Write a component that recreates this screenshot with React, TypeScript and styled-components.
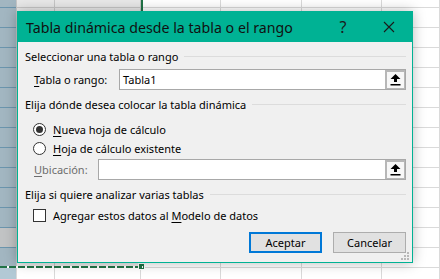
import React from 'react';
import styled, { createGlobalStyle } from 'styled-components';

const TEAL = '#00b294';

const GlobalStyle = createGlobalStyle`
  html, body {
    margin: 0;
    padding: 0;
  }
  body {
    width: 440px;
    height: 279px;
    overflow: hidden;
    background: #ffffff;
    font-family: "Noto Sans", "Open Sans", sans-serif;
  }
`;

const columns = [
  { width: 17, filled: true },
  { width: 38 },
  { width: 86 },
  { width: 80 },
  { width: 81 },
  { width: 80 },
  { width: 58 },
];

const App: React.FC = () => (
  <>
    <GlobalStyle />
    <Sheet>
      {columns.map((c, i) => (
        <Column key={i} $width={c.width} $filled={!!c.filled} />
      ))}
      <CopyMarquee>
        <MarqueeHandle />
      </CopyMarquee>
      <Dialog>
        <TitleBar>
          <Title>Tabla dinámica desde la tabla o el rango</Title>
          <TitleButton>?</TitleButton>
          <TitleButton>
            <svg width="12" height="12" viewBox="0 0 12 12">
              <path d="M1 1 L11 11 M11 1 L1 11" stroke="#1a1a1a" strokeWidth="1.1" fill="none" />
            </svg>
          </TitleButton>
        </TitleBar>
        <Body>
          <SectionHeader $top={6}>Seleccionar una tabla o rango</SectionHeader>
          <FieldRow $top={5}>
            <FieldLabel $width={85}>
              <Key>T</Key>abla o rango:
            </FieldLabel>
            <RefEdit>
              <RefText>Tabla1</RefText>
              <RefButton>
                <CollapseIcon />
              </RefButton>
            </RefEdit>
          </FieldRow>

          <SectionHeader $top={6}>Elija dónde desea colocar la tabla dinámica</SectionHeader>
          <OptionList $top={8}>
            <OptionRow>
              <Radio $checked />
              <OptionText>
                <Key>N</Key>ueva hoja de cálculo
              </OptionText>
            </OptionRow>
            <OptionRow>
              <Radio $checked={false} />
              <OptionText>
                <Key>H</Key>oja de cálculo existente
              </OptionText>
            </OptionRow>
          </OptionList>
          <FieldRow $top={1}>
            <FieldLabel $width={64} $disabled>
              <Key>U</Key>bicación:
            </FieldLabel>
            <RefEdit>
              <RefText />
              <RefButton>
                <CollapseIcon />
              </RefButton>
            </RefEdit>
          </FieldRow>

          <SectionHeader $top={6}>Elija si quiere analizar varias tablas</SectionHeader>
          <OptionList $top={4}>
            <OptionRow>
              <CheckBox />
              <OptionText>
                Agregar estos datos al <Key>M</Key>odelo de datos
              </OptionText>
            </OptionRow>
          </OptionList>

          <ButtonBar>
            <PushButton $default>Aceptar</PushButton>
            <PushButton>Cancelar</PushButton>
          </ButtonBar>
        </Body>
        <Grip>
          <svg width="8" height="8" viewBox="0 0 8 8">
            <rect x="6" y="0" width="2" height="2" fill="#b8b8b8" />
            <rect x="3" y="3" width="2" height="2" fill="#b8b8b8" />
            <rect x="6" y="3" width="2" height="2" fill="#b8b8b8" />
            <rect x="0" y="6" width="2" height="2" fill="#b8b8b8" />
            <rect x="3" y="6" width="2" height="2" fill="#b8b8b8" />
            <rect x="6" y="6" width="2" height="2" fill="#b8b8b8" />
          </svg>
        </Grip>
      </Dialog>
    </Sheet>
  </>
);

const CollapseIcon: React.FC = () => (
  <svg width="11" height="12" viewBox="0 0 11 12">
    <path d="M5.5 0 L10.5 5 L7 5 L7 8 L4 8 L4 5 L0.5 5 Z" fill="#000" />
    <rect x="0.5" y="10" width="10" height="1.5" fill="#000" />
  </svg>
);

export default App;

const Sheet = styled.div`
  position: relative;
  display: flex;
  width: 440px;
  height: 279px;
  overflow: hidden;
  background-color: #ffffff;
  background-image: linear-gradient(to bottom, #dadada 0 1px, transparent 1px);
  background-size: 100% 20px;
  background-position: 0 7px;
`;

// first column holds table cells with a blue-grey fill and one grey cell
const Column = styled.div<{ $width: number; $filled: boolean }>`
  flex: none;
  width: ${p => p.$width}px;
  height: 100%;
  box-sizing: border-box;
  border-right: 1px solid #dadada;
  background-color: ${p => (p.$filled ? '#b2c9d5' : 'transparent')};
  background-image: ${p =>
    p.$filled
      ? 'linear-gradient(to bottom, #76a4bf 0 1px, transparent 1px), linear-gradient(#d5d7d8, #d5d7d8)'
      : 'none'};
  background-size: 100% 20px, 100% 19px;
  background-position: 0 7px, 0 228px;
  background-repeat: repeat, no-repeat;
`;

const CopyMarquee = styled.div`
  position: absolute;
  left: 0;
  top: 0;
  width: 143px;
  height: 268px;
  box-sizing: border-box;
  background: rgba(0, 0, 0, 0.09);
  border-right: 2px solid #217346;
  border-bottom: 2px solid #217346;
  &::after {
    content: '';
    position: absolute;
    left: 0;
    right: -2px;
    bottom: -2px;
    height: 2px;
    background: repeating-linear-gradient(to right, transparent 0 7px, #ffffff 7px 9px);
  }
`;

const MarqueeHandle = styled.div`
  position: absolute;
  right: -4px;
  bottom: -4px;
  width: 5px;
  height: 5px;
  background: #217346;
  border: 1px solid #ffffff;
`;

const Dialog = styled.div`
  position: absolute;
  left: 17px;
  top: 11px;
  width: 396px;
  height: 252px;
  box-sizing: border-box;
  display: flex;
  flex-direction: column;
  border: 1px solid ${TEAL};
  background: #f0f0f0;
  box-shadow: 0 0 12px rgba(0, 0, 0, 0.28);
  color: #000;
  font-size: 11px;
`;

const TitleBar = styled.div`
  display: flex;
  align-items: center;
  height: 30px;
  flex: none;
  background: ${TEAL};
  padding-left: 8px;
`;

const Title = styled.div`
  flex: 1;
  font-size: 14.2px;
  color: #111;
  white-space: nowrap;
`;

const TitleButton = styled.div`
  width: 46px;
  height: 30px;
  display: flex;
  align-items: center;
  justify-content: center;
  font-size: 16px;
  color: #1a1a1a;
`;

const Body = styled.div`
  flex: 1;
  display: flex;
  flex-direction: column;
  padding: 0 6px 0 7px;
`;

const SectionHeader = styled.div<{ $top: number }>`
  display: flex;
  align-items: center;
  height: 16px;
  margin-top: ${p => p.$top}px;
  white-space: nowrap;
  &::after {
    content: '';
    flex: 1;
    height: 1px;
    margin-left: 6px;
    background: #dcdcdc;
  }
`;

const FieldRow = styled.div<{ $top: number }>`
  display: flex;
  align-items: center;
  margin-top: ${p => p.$top}px;
  padding-left: 9px;
`;

const FieldLabel = styled.div<{ $width: number; $disabled?: boolean }>`
  flex: none;
  width: ${p => p.$width}px;
  color: ${p => (p.$disabled ? '#6d6d6d' : '#000')};
  white-space: nowrap;
`;

const Key = styled.span`
  text-decoration: underline;
  text-underline-offset: 2px;
`;

const RefEdit = styled.div`
  flex: 1;
  display: flex;
  height: 21px;
  box-sizing: border-box;
  border: 1px solid #a8a8a8;
  background: #ffffff;
`;

const RefText = styled.div`
  flex: 1;
  display: flex;
  align-items: center;
  padding-left: 3px;
`;

const RefButton = styled.div`
  flex: none;
  width: 20px;
  box-sizing: border-box;
  display: flex;
  align-items: center;
  justify-content: center;
  border: 2px solid #b7b7b7;
  border-right-width: 1px;
  border-bottom-width: 1px;
  background: #f7f7f7;
`;

const OptionList = styled.div<{ $top: number }>`
  display: flex;
  flex-direction: column;
  margin-top: ${p => p.$top}px;
  padding-left: 8px;
`;

const OptionRow = styled.div`
  display: flex;
  align-items: center;
  height: 19px;
`;

const OptionText = styled.div`
  margin-left: 7px;
  white-space: nowrap;
`;

const Radio = styled.div<{ $checked: boolean }>`
  position: relative;
  flex: none;
  width: 13px;
  height: 13px;
  box-sizing: border-box;
  border-radius: 50%;
  border: 1px solid #333;
  background: #fff;
  display: flex;
  align-items: center;
  justify-content: center;
  &::after {
    content: '';
    display: ${p => (p.$checked ? 'block' : 'none')};
    width: 7px;
    height: 7px;
    border-radius: 50%;
    background: #333;
  }
`;

const CheckBox = styled.div`
  flex: none;
  width: 13px;
  height: 13px;
  box-sizing: border-box;
  border: 1px solid #333;
  background: #fff;
`;

const ButtonBar = styled.div`
  display: flex;
  justify-content: flex-end;
  gap: 11px;
  margin-top: 7px;
`;

const PushButton = styled.div<{ $default?: boolean }>`
  width: 73px;
  height: 21px;
  box-sizing: border-box;
  display: flex;
  align-items: center;
  justify-content: center;
  background: #e1e1e1;
  border: ${p => (p.$default ? '2px solid #0078d7' : '1px solid #adadad')};
`;

const Grip = styled.div`
  position: absolute;
  right: 3px;
  bottom: 2px;
  width: 8px;
  height: 8px;
  display: flex;
`;
